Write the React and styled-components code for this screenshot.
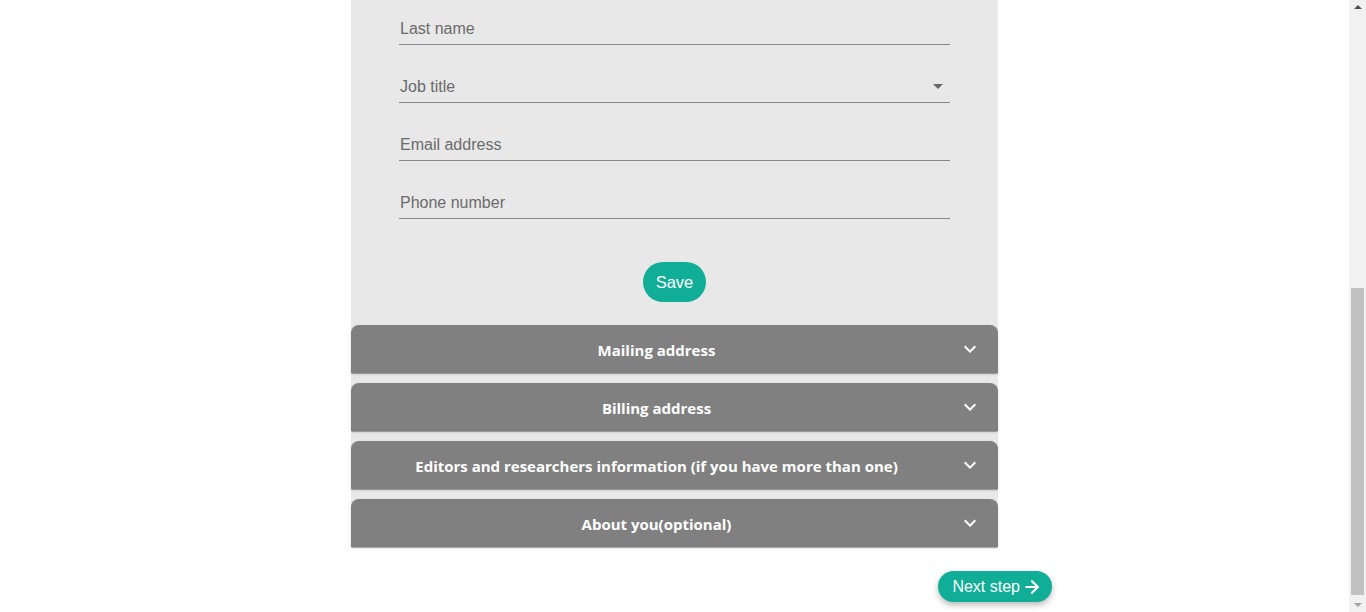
import React from 'react';
import styled, { createGlobalStyle } from 'styled-components';
import { ArrowRight } from 'lucide-react';

const GlobalStyle = createGlobalStyle`
	html, body {
		margin: 0;
		padding: 0;
		overflow: hidden;
		background: #ffffff;
	}
	* {
		box-sizing: border-box;
	}
`;

const fields = [
	{ label: 'Last name' },
	{ label: 'Job title', select: true },
	{ label: 'Email address' },
	{ label: 'Phone number' },
];

const sections = [
	'Mailing address',
	'Billing address',
	'Editors and researchers information (if you have more than one)',
	'About you(optional)',
];

function DropArrow() {
	return (
		<svg className="drop" width="10" height="5" viewBox="7 10 10 5">
			<path d="M7 10l5 5 5-5z" fill="#666666" />
		</svg>
	);
}

function ExpandMore() {
	return (
		<svg width="24" height="24" viewBox="0 0 24 24">
			<path d="M16.59 8.59L12 13.17 7.41 8.59 6 10l6 6 6-6z" fill="#ffffff" />
		</svg>
	);
}

function App() {
	return (
		<Screen>
			<GlobalStyle />
			<Page>
				<Column>
					<Panel>
						<FormBody>
							{fields.map((f) => (
								<Field key={f.label}>
									<span className="label">{f.label}</span>
									{f.select && <DropArrow />}
								</Field>
							))}
							<SaveRow>
								<SaveButton>Save</SaveButton>
							</SaveRow>
						</FormBody>
						<Sections>
							{sections.map((s) => (
								<SectionHeader key={s}>
									<span className="title">{s}</span>
									<IconSlot>
										<ExpandMore />
									</IconSlot>
								</SectionHeader>
							))}
						</Sections>
					</Panel>
					<Footer>
						<NextButton>
							Next step
							<ArrowRight size={20} strokeWidth={2.6} />
						</NextButton>
					</Footer>
				</Column>
			</Page>
			<Scrollbar>
				<ScrollArrow $up />
				<Track>
					<Thumb />
				</Track>
				<ScrollArrow />
			</Scrollbar>
		</Screen>
	);
}

export default App;

const Screen = styled.div`
	display: flex;
	width: 100vw;
	height: 100vh;
	overflow: hidden;
`;

const Page = styled.main`
	flex: 1;
	display: flex;
	justify-content: center;
`;

const Column = styled.div`
	width: 647px;
	display: flex;
	flex-direction: column;
`;

const Panel = styled.section`
	background-color: #e8e8e8;
	display: flex;
	flex-direction: column;
`;

const FormBody = styled.div`
	padding: 15px 48px 23px;
	display: flex;
	flex-direction: column;
	gap: 28px;
`;

const Field = styled.div`
	display: flex;
	align-items: flex-start;
	padding: 4px 0 6px;
	border-bottom: 1px solid #888888;
	font-family: 'Liberation Sans', Arial, sans-serif;
	font-size: 16px;
	line-height: 19px;
	color: #6b6b6b;

	.label {
		flex: 1;
		padding-left: 1px;
	}

	.drop {
		margin: 7px 7px 0 0;
	}
`;

const SaveRow = styled.div`
	display: flex;
	justify-content: center;
	margin-top: 15px;
`;

const SaveButton = styled.button`
	height: 40px;
	padding: 0 13px;
	border: none;
	border-radius: 20px;
	background-color: #10ae96;
	color: #ffffff;
	font-family: 'Liberation Sans', Arial, sans-serif;
	font-size: 16.5px;
	cursor: pointer;
`;

const Sections = styled.div`
	display: flex;
	flex-direction: column;
	gap: 10px;
`;

const SectionHeader = styled.div`
	height: 48px;
	display: flex;
	align-items: center;
	padding: 0 16px;
	background-color: #808080;
	border-radius: 8px 8px 0 0;
	box-shadow: 0 2px 1px -1px rgb(0 0 0 / 20%), 0 1px 1px 0 rgb(0 0 0 / 14%),
		0 1px 3px 0 rgb(0 0 0 / 12%);
	color: #ffffff;

	.title {
		flex: 1;
		padding-top: 2px;
		text-align: center;
		font-family: 'Open Sans', sans-serif;
		font-weight: 700;
		font-size: 15px;
	}
`;

const IconSlot = styled.div`
	display: flex;
	padding: 12px;
	margin-right: -12px;
`;

const Footer = styled.div`
	display: flex;
	justify-content: flex-end;
	margin-right: -54px;
	margin-top: 24px;
`;

const NextButton = styled.button`
	height: 31px;
	display: flex;
	align-items: center;
	gap: 2px;
	padding: 0 10px 0 14px;
	border: none;
	border-radius: 16px;
	background-color: #10ae96;
	color: #ffffff;
	font-family: 'Liberation Sans', Arial, sans-serif;
	font-size: 16px;
	box-shadow: 0 3px 6px rgb(0 0 0 / 28%);
	cursor: pointer;
`;

const Scrollbar = styled.div`
	width: 17px;
	background-color: #f1f1f1;
	display: flex;
	flex-direction: column;
`;

const ScrollArrow = styled.div`
	height: 17px;
	display: flex;
	align-items: center;
	justify-content: center;

	&::before {
		content: '';
		border-left: 4px solid transparent;
		border-right: 4px solid transparent;
		${(p) =>
			p.$up
				? 'border-bottom: 4px solid #505050; margin-bottom: 3px;'
				: 'border-top: 4px solid #a3a3a3; margin-top: 2px;'}
	}
`;

const Track = styled.div`
	flex: 1;
	display: flex;
	flex-direction: column;
	justify-content: flex-end;
	padding: 0 2px;
`;

const Thumb = styled.div`
	height: 307px;
	background-color: #c1c1c1;
`;
